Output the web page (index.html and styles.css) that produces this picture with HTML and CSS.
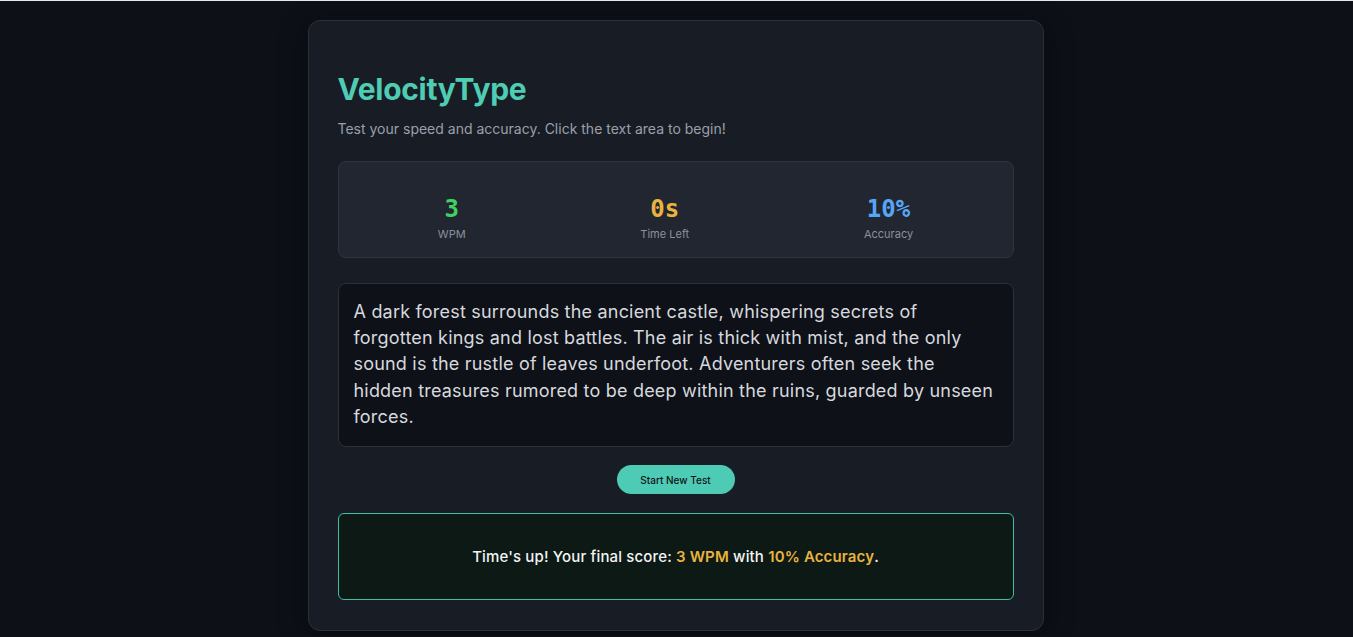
FILE: index.html
```html
<!DOCTYPE html>
<html lang="en">
<head>
<meta charset="utf-8">
<title>VelocityType</title>
<link rel="stylesheet" href="styles.css">
</head>
<body>
<main class="card">
  <h1 class="title">VelocityType</h1>
  <p class="subtitle">Test your speed and accuracy. Click the text area to begin!</p>
  <section class="stats">
    <div class="stat">
      <div class="stat-value wpm">3</div>
      <div class="stat-label">WPM</div>
    </div>
    <div class="stat">
      <div class="stat-value time">0s</div>
      <div class="stat-label">Time Left</div>
    </div>
    <div class="stat">
      <div class="stat-value acc">10%</div>
      <div class="stat-label">Accuracy</div>
    </div>
  </section>
  <div class="passage">A dark forest surrounds the ancient castle, whispering secrets of forgotten kings and lost battles. The air is thick with mist, and the only sound is the rustle of leaves underfoot. Adventurers often seek the hidden treasures rumored to be deep within the ruins, guarded by unseen forces.</div>
  <div class="actions">
    <button class="btn">Start New Test</button>
  </div>
  <div class="result">Time's up! Your final score: <strong>3 WPM</strong> with <strong>10% Accuracy</strong>.</div>
</main>
</body>
</html>
```

FILE: styles.css
```css
html {
  background: #0d1017;
}
body {
  margin: 0;
  border-top: 1px solid #ece6ea;
  background: #0d1017;
  font-family: Inter, "Noto Sans", sans-serif;
  min-height: 636px;
  box-sizing: border-box;
  padding: 19px 2px 0 0;
}
.card {
  width: 736px;
  box-sizing: border-box;
  margin: 0 auto;
  background: #181c24;
  border: 1px solid #2b3039;
  border-radius: 12px;
  padding: 30px 29px 30px 29px;
  box-shadow: 0 8px 30px rgba(0, 0, 0, 0.45);
}
.title {
  margin: 19px 0 0 0;
  font-size: 30px;
  line-height: 38px;
  font-weight: 700;
  color: #4ecdb4;
  letter-spacing: -0.3px;
}
.subtitle {
  margin: 11px 0 0 0;
  font-size: 14px;
  line-height: 20px;
  color: #9aa0ab;
}
.stats {
  margin-top: 22px;
  height: 97px;
  box-sizing: border-box;
  background: #222630;
  border: 1px solid #2f343e;
  border-radius: 8px;
  padding: 17px 12px 0 12px;
  display: flex;
  justify-content: space-around;
  align-items: center;
}
.stat {
  display: flex;
  flex-direction: column;
  align-items: center;
}
.stat-value {
  font-family: "DejaVu Sans Mono", "Liberation Mono", monospace;
  font-weight: 700;
  font-size: 24px;
  line-height: 28px;
}
.wpm { color: #3fcf62; }
.time { color: #e8b33e; }
.acc { color: #56a6f7; }
.stat-label {
  margin-top: 4px;
  font-size: 11px;
  line-height: 14px;
  color: #8b919c;
}
.passage {
  margin-top: 25px;
  background: #0e1118;
  border: 1px solid #2b3039;
  border-radius: 8px;
  padding: 15px 15px 16px 15px;
  font-size: 18px;
  letter-spacing: 0.2px;
  line-height: 26.2px;
  color: #d6d9de;
}
.actions {
  display: flex;
  justify-content: center;
  margin-top: 18px;
}
.btn {
  width: 118px;
  height: 29px;
  border: none;
  border-radius: 15px;
  background: #4ecbb5;
  color: #111418;
  font-family: Inter, "Noto Sans", sans-serif;
  font-size: 10px;
  font-weight: 500;
  padding: 0;
}
.result {
  margin-top: 19px;
  height: 87px;
  box-sizing: border-box;
  background: #0c1914;
  border: 1px solid #3ebea2;
  border-radius: 6px;
  display: flex;
  align-items: center;
  justify-content: center;
  white-space: pre;
  font-size: 15px;
  letter-spacing: 0.15px;
  font-weight: 500;
  color: #f2f4f5;
}
.result strong {
  color: #e8b33e;
  font-weight: 600;
}
```
